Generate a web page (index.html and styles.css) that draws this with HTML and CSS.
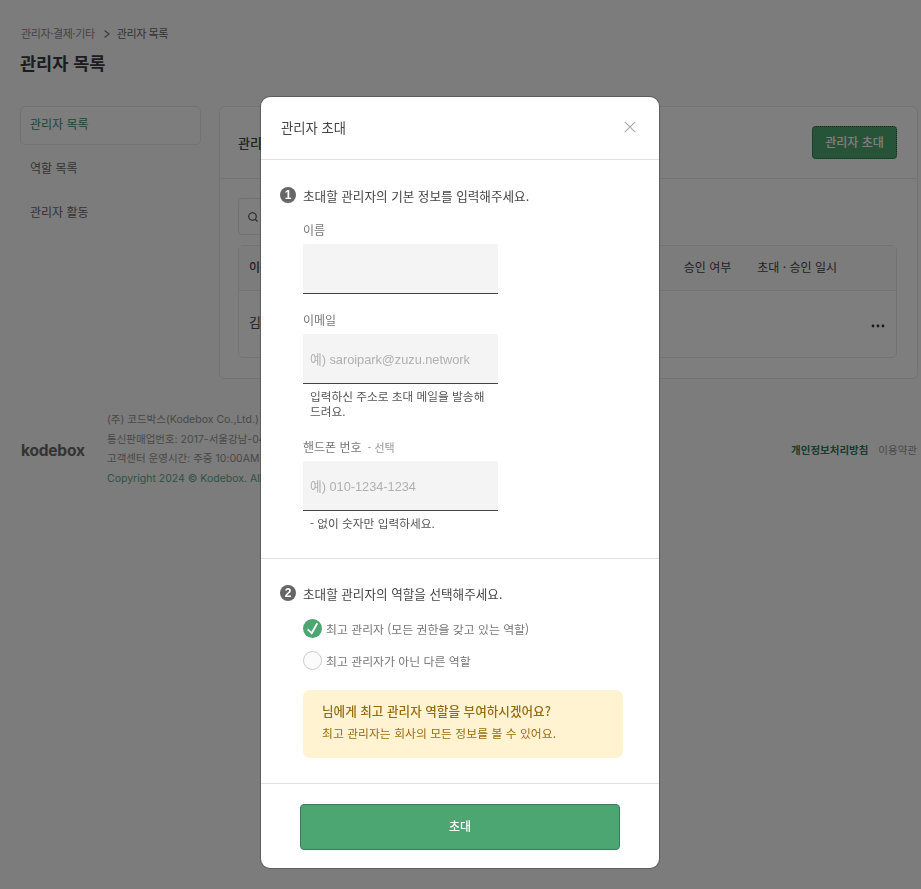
FILE: index.html
```html
<!DOCTYPE html>
<html lang="ko">
<head>
<meta charset="utf-8">
<title>관리자 목록</title>
<link rel="stylesheet" href="styles.css">
</head>
<body>
<div class="page">
  <nav class="crumbs"><span class="crumb-a">관리자·결제·기타</span>
    <svg class="crumb-sep" width="8" height="10" viewBox="0 0 8 10"><path d="M1.5 1.5 6 5 1.5 8.5" fill="none" stroke="#777" stroke-width="1.2"/></svg>
    <span class="crumb-b">관리자 목록</span></nav>
  <h1 class="title">관리자 목록</h1>
  <div class="layout">
    <aside class="side">
      <div class="side-item active">관리자 목록</div>
      <div class="side-item">역할 목록</div>
      <div class="side-item">관리자 활동</div>
    </aside>
    <main class="card">
      <div class="card-head"><span class="card-title">관리자 목록</span><button class="invite">관리자 초대</button></div>
      <div class="card-body">
        <div class="search"><svg width="12" height="12" viewBox="0 0 12 12"><circle cx="5.5" cy="5.5" r="3.8" fill="none" stroke="#444" stroke-width="1.1"/><path d="M8.3 8.3 10.5 10.5" stroke="#444" stroke-width="1.1"/></svg></div>
        <div class="table">
          <div class="thead"><span>이름</span><span class="th-right"><span>승인 여부</span><span>초대 · 승인 일시</span></span></div>
          <div class="trow"><span>김</span><svg class="dots" width="14" height="4" viewBox="0 0 14 4"><circle cx="2" cy="2" r="1.4"/><circle cx="7" cy="2" r="1.4"/><circle cx="12" cy="2" r="1.4"/></svg></div>
        </div>
      </div>
    </main>
  </div>
  <footer class="footer">
    <div class="logo">kodebox</div>
    <div class="f-info">
      <div>(주) 코드박스(Kodebox Co.,Ltd.)</div>
      <div>통신판매업번호: 2017-서울강남-04</div>
      <div>고객센터 운영시간: 주중 10:00AM</div>
      <div class="f-copy">Copyright 2024 © Kodebox. All</div>
    </div>
    <div class="f-links"><b>개인정보처리방침</b><span>이용약관</span></div>
  </footer>
</div>

<div class="overlay">
  <section class="modal">
    <header class="m-head"><span>관리자 초대</span>
      <svg width="12" height="12" viewBox="0 0 12 12"><path d="M.8.8 11.2 11.2M11.2.8.8 11.2" stroke="#aaa" stroke-width="1.2" fill="none"/></svg>
    </header>
    <div class="m-sec one">
      <div class="step"><span class="num">1</span>초대할 관리자의 기본 정보를 입력해주세요.</div>
      <div class="fields">
        <label class="lab">이름</label>
        <div class="inp"></div>
        <label class="lab mail">이메일</label>
        <div class="inp"><span class="ph">예) saroipark@zuzu.network</span></div>
        <p class="help">입력하신 주소로 초대 메일을 발송해드려요.</p>
        <label class="lab phone">핸드폰 번호<small>- 선택</small></label>
        <div class="inp"><span class="ph">예) 010-1234-1234</span></div>
        <p class="help">- 없이 숫자만 입력하세요.</p>
      </div>
    </div>
    <div class="m-sec two">
      <div class="step"><span class="num">2</span>초대할 관리자의 역할을 선택해주세요.</div>
      <div class="radios">
        <div class="radio"><span class="dot on"><svg width="19" height="19" viewBox="0 0 19 19"><path d="M4.7 10.3 8.7 14.3 14.3 4.3" fill="none" stroke="#fff" stroke-width="1.9"/></svg></span>최고 관리자 (모든 권한을 갖고 있는 역할)</div>
        <div class="radio"><span class="dot"></span>최고 관리자가 아닌 다른 역할</div>
      </div>
      <div class="notice"><strong>님에게 최고 관리자 역할을 부여하시겠어요?</strong><span>최고 관리자는 회사의 모든 정보를 볼 수 있어요.</span></div>
    </div>
    <div class="m-foot"><button class="submit">초대</button></div>
  </section>
</div>
</body>
</html>
```
FILE: styles.css
```css
* { box-sizing: border-box; }
html, body { margin: 0; height: 100%; }
body { width: 921px; height: 889px; overflow: hidden; background: #f9f9f9; color: #444; font-family: "Noto Sans CJK KR", "Noto Sans", sans-serif; font-size: 12px; }
.page { padding: 25px 3px 0 20px; width: 921px; }
.crumbs { display: flex; align-items: center; height: 16px; font-size: 11px; letter-spacing: -.35px; }
.crumb-a { color: #888; margin-left: 1px; }
.crumb-sep { margin: 1px 6px 0 8px; }
.crumb-b { color: #666; letter-spacing: -.45px; }
.title { margin: 7px 0 0; height: 30px; line-height: 30px; font-size: 17.5px; font-weight: 700; color: #3a3a3a; }
.layout { display: flex; margin-top: 28px; gap: 18px; }
.side { width: 181px; flex: none; }
.side-item { height: 44px; line-height: 36px; padding-left: 10px; font-size: 12px; color: #666; }
.side-item.active { height: 39px; line-height: 34px; margin-bottom: 5px; border: 1px solid #e4e4e4; border-radius: 5px; background: #fbfbfb; padding-left: 9px; color: #3f8a66; }
.card { flex: 1; height: 273px; border: 1px solid #e7e7e7; border-radius: 6px; background: #fcfcfc; }
.card-head { display: flex; justify-content: space-between; align-items: center; height: 72px; padding: 0 20px 0 18px; border-bottom: 1px solid #e7e7e7; font-size: 13px; font-weight: 500; color: #444; }
.invite { width: 85px; height: 33px; padding: 0 0 2px; border: 1px dotted #1c5a3d; border-radius: 4px; background: #4fa673; color: #fff; font: 500 12px "Noto Sans CJK KR", sans-serif; }
.card-body { padding: 19px 20px 0 18px; }
.search { display: flex; align-items: center; width: 200px; height: 37px; padding-left: 8px; border: 1px solid #e4e4e4; border-radius: 4px; }
.table { margin-top: 10px; height: 113px; border: 1px solid #e7e7e7; border-radius: 5px; }
.thead { display: flex; justify-content: space-between; align-items: center; height: 45px; padding: 0 59px 3px 10px; border-bottom: 1px solid #e7e7e7; background: #f9f9f9; font-size: 12px; font-weight: 500; }
.th-right { display: flex; gap: 26px; font-weight: 400; }
.trow { display: flex; justify-content: space-between; align-items: center; height: 66px; padding: 0 11px 5px 10px; font-size: 13px; }
.dots { fill: #333; margin-top: 9px; }
.footer { display: flex; align-items: center; margin-top: 30px; height: 80px; }
.logo { width: 87px; flex: none; margin-top: 3px; padding-left: 1px; font: 700 15.5px/20px Inter, sans-serif; color: #666; letter-spacing: -.2px; }
.f-info { flex: 1; font: 400 10.5px/19.5px Inter, "Noto Sans CJK KR", sans-serif; color: #919191; white-space: nowrap; }
.f-copy { color: #62a585; }
.f-links { display: flex; gap: 10px; margin-right: 1px; font-size: 10.5px; color: #919191; }
.f-links b { color: #2f7a58; font-weight: 700; }

.overlay { position: fixed; inset: 0; background: rgba(0, 0, 0, .5); }
.modal { position: absolute; left: 261px; top: 97px; width: 398px; height: 771px; background: #fff; border-radius: 9px; box-shadow: 0 0 0 1px rgba(0, 0, 0, .25); display: flex; flex-direction: column; color: #444; }
.m-head { display: flex; justify-content: space-between; align-items: center; height: 63px; padding: 0 23px 2px 20px; border-bottom: 1px solid #e2e2e2; font-size: 13.3px; color: #444; }
.m-sec { padding: 0 19px; border-bottom: 1px solid #e2e2e2; }
.m-sec.one { height: 399px; padding-top: 25px; }
.m-sec.two { height: 225px; padding-top: 24px; }
.step { display: flex; align-items: center; gap: 7px; height: 20px; font-size: 12.6px; color: #444; }
.num { display: flex; align-items: center; justify-content: center; width: 16px; height: 16px; border-radius: 50%; background: #666; color: #fff; font: 700 12px/16px "Liberation Sans", sans-serif; }
.fields { width: 195px; margin: 18px 0 0 23px; }
.lab { display: block; height: 21px; line-height: 14px; font-size: 12px; color: #777; }
.lab.mail { margin-top: 19px; }
.lab small { margin-left: 6px; font-size: 11px; color: #999; }
.inp { display: flex; align-items: center; height: 50px; padding: 0 7px; background: #f4f4f4; border-bottom: 1px solid #444; border-radius: 2px 2px 0 0; }
.ph { font: 400 12.8px "Liberation Sans", "Noto Sans CJK KR", sans-serif; color: #b0b0b0; white-space: nowrap; letter-spacing: -.03px; }
.help { margin: 5px 0 0; padding: 0 7px; font-size: 11.7px; line-height: 14.5px; color: #555; word-break: break-all; }
.help + .lab { margin-top: 22px; }
.radios { margin: 9px 0 0 23px; }
.radio { display: flex; align-items: center; gap: 4px; height: 32px; font-size: 11.9px; color: #777; }
.dot { width: 19px; height: 19px; border: 1px solid #ccc; border-radius: 50%; background: #fbfbfb; flex: none; }
.dot.on { border: 0; background: #4ca672; }
.dot svg { display: block; }
.notice { display: flex; flex-direction: column; gap: 6px; margin: 14px 0 0 23px; width: 320px; height: 68px; padding: 13px 19px; background: #fff3d2; border-radius: 7px; color: #9a6b0e; }
.notice strong { font-size: 12.6px; font-weight: 500; line-height: 16px; }
.notice span { font-size: 11.8px; line-height: 16px; letter-spacing: .05px; }
.m-foot { flex: 1; padding: 20px 0 0 39px; }
.submit { width: 320px; height: 46px; border: 1px solid #3d7a60; border-radius: 4px; background: #4ca672; color: #fff; padding: 0 0 3px; font: 500 12px "Noto Sans CJK KR", sans-serif; }
```
